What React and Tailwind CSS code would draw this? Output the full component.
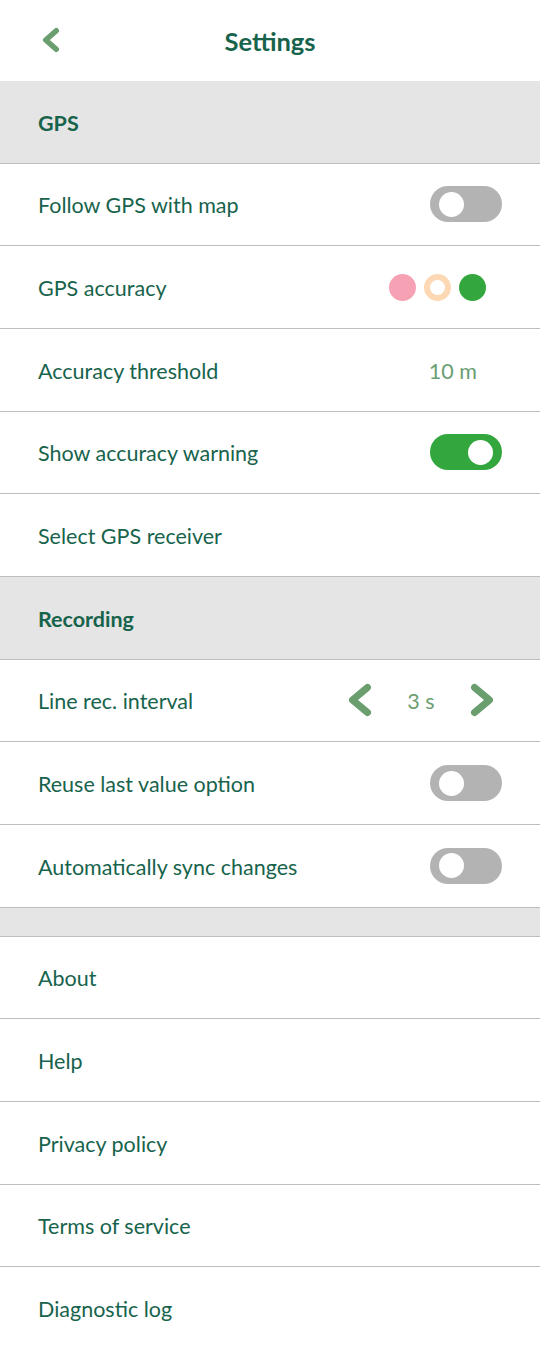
import React from "react";

const ROW = "h-[82.67px] flex items-center border-b border-[#bdbdbd] px-[38px]";

const Chevron = ({ dir = "left", className = "", w = 24, h = 34, sw = 7 }) => (
  <svg width={w} height={h} viewBox={`0 0 ${w} ${h}`} className={className}>
    {dir === "left" ? (
      <polyline points={`${w - sw / 2 - 1},${sw / 2 + 1} ${sw / 2 + 1},${h / 2} ${w - sw / 2 - 1},${h - sw / 2 - 1}`} fill="none" stroke="#6a9e6f" strokeWidth={sw} strokeLinecap="round" strokeLinejoin="round" />
    ) : (
      <polyline points={`${sw / 2 + 1},${sw / 2 + 1} ${w - sw / 2 - 1},${h / 2} ${sw / 2 + 1},${h - sw / 2 - 1}`} fill="none" stroke="#6a9e6f" strokeWidth={sw} strokeLinecap="round" strokeLinejoin="round" />
    )}
  </svg>
);

const Toggle = ({ on }) => (
  <div className={`w-[72px] h-[36px] rounded-full flex items-center px-[9px] ${on ? "bg-[#33a73e] justify-end" : "bg-[#b3b3b3] justify-start"}`}>
    <div className="w-[25px] h-[25px] rounded-full bg-white" />
  </div>
);

const Section = ({ title }) => (
  <div className="h-[82.67px] flex items-center border-b border-[#bdbdbd] bg-[#e5e5e5] px-[38px]">
    <span className="text-[21.5px] font-bold text-[#17634c] pt-[2px]">{title}</span>
  </div>
);

const Row = ({ label, children }) => (
  <div className={`${ROW} justify-between`}>
    <span className="text-[21.5px] text-[#17634c] pt-[2px]">{label}</span>
    {children}
  </div>
);

export default function App() {
  return (
    <div className="w-[540px] min-h-[1349px] bg-white" style={{ fontFamily: "Lato, 'Open Sans', sans-serif" }}>
      <div className="h-[81px] relative flex items-center justify-center">
        <div className="absolute left-[42px] top-[27px]">
          <Chevron dir="left" w={18} h={26} sw={5.5} />
        </div>
        <span className="text-[25.5px] font-bold text-[#17634c] pt-[2px]">Settings</span>
      </div>

      <Section title="GPS" />
      <Row label="Follow GPS with map">
        <Toggle on={false} />
      </Row>
      <Row label="GPS accuracy">
        <div className="flex items-center gap-[8px] mr-[16px]">
          <div className="w-[27px] h-[27px] rounded-full bg-[#f7a1b4]" />
          <div className="w-[27px] h-[27px] rounded-full border-[6px] border-[#fdd8b4] bg-white" />
          <div className="w-[27px] h-[27px] rounded-full bg-[#33a63d]" />
        </div>
      </Row>
      <Row label="Accuracy threshold">
        <span className="text-[21.5px] text-[#6b9e72] mr-[25px] pt-[2px]">10 m</span>
      </Row>
      <Row label="Show accuracy warning">
        <Toggle on />
      </Row>
      <Row label="Select GPS receiver" />

      <Section title="Recording" />
      <Row label="Line rec. interval">
        <div className="flex items-center mr-[8px]">
          <Chevron dir="left" />
          <span className="text-[21.5px] text-[#6b9e72] w-[98px] text-center pt-[2px]">3 s</span>
          <Chevron dir="right" />
        </div>
      </Row>
      <Row label="Reuse last value option">
        <Toggle on={false} />
      </Row>
      <Row label="Automatically sync changes">
        <Toggle on={false} />
      </Row>
      <div className="h-[29px] bg-[#e5e5e5] border-b border-[#bdbdbd]" />

      <Row label="About" />
      <Row label="Help" />
      <Row label="Privacy policy" />
      <Row label="Terms of service" />
      <div className="h-[82.67px] flex items-center px-[38px]">
        <span className="text-[21.5px] text-[#17634c] pt-[2px]">Diagnostic log</span>
      </div>
    </div>
  );
}
